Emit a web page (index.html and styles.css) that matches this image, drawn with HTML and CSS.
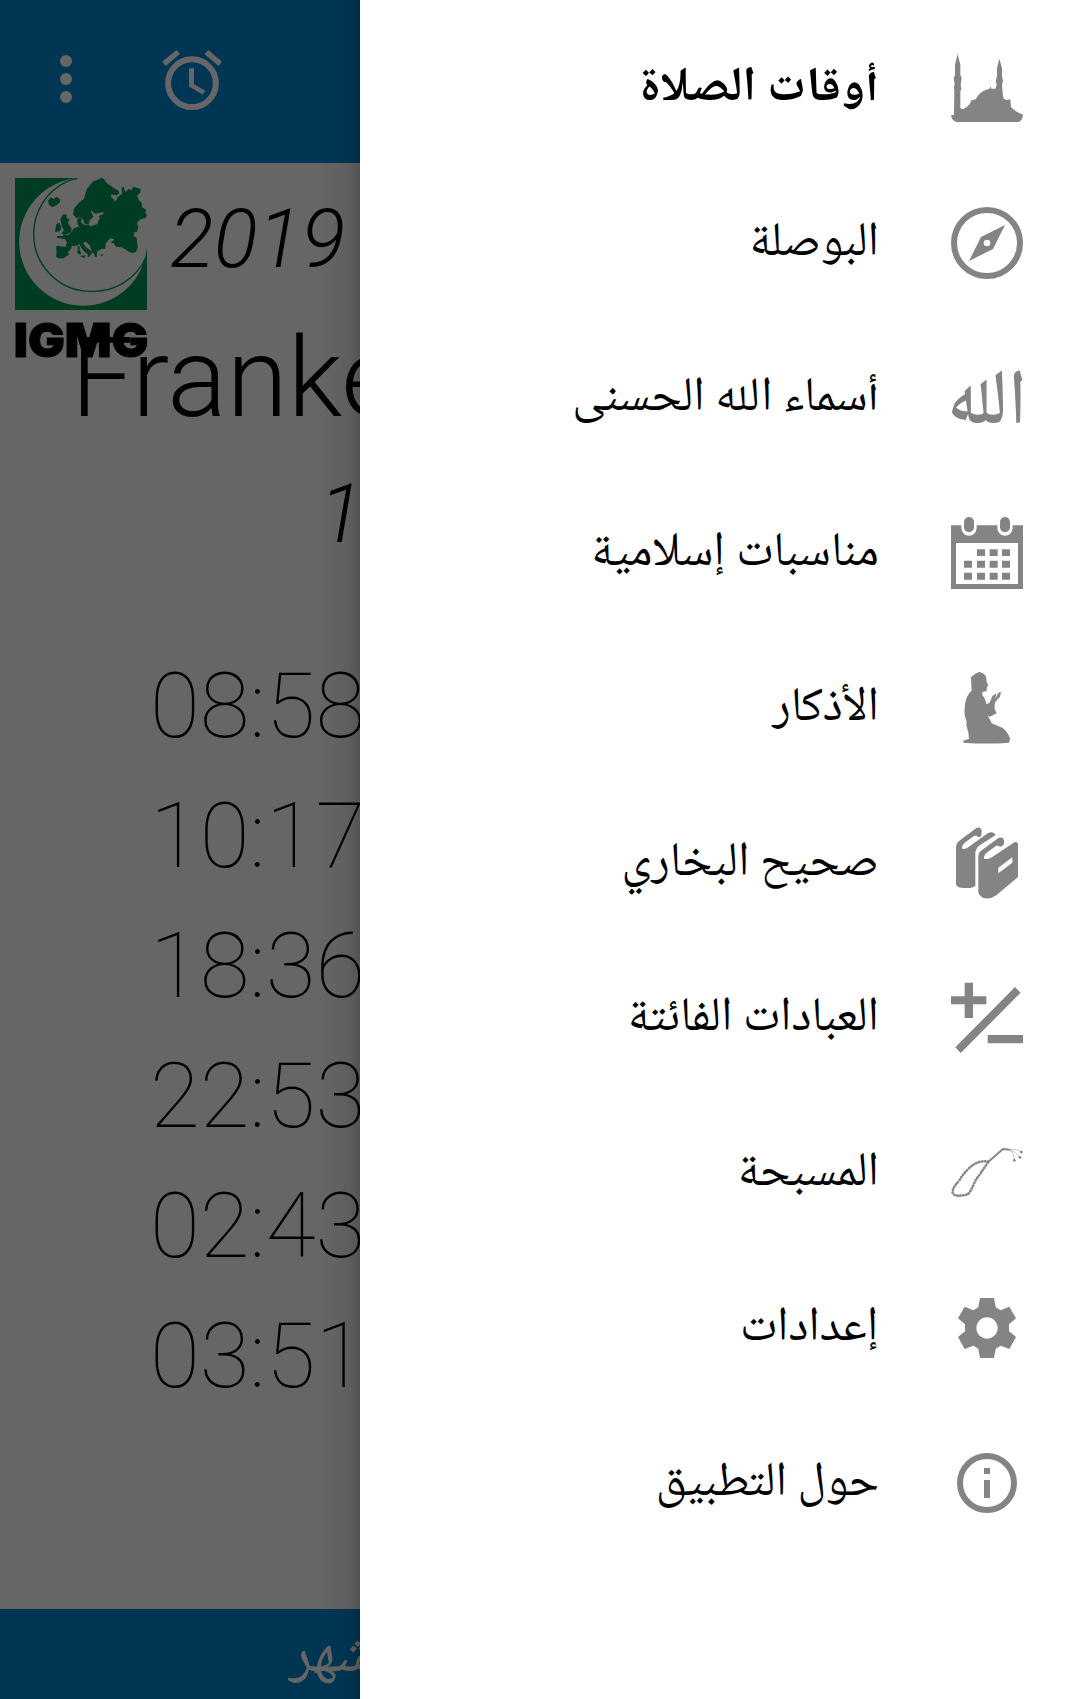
FILE: index.html
```html
<!DOCTYPE html>
<html lang="ar">
<head>
<meta charset="utf-8">
<title>أوقات الصلاة</title>
<link rel="stylesheet" href="styles.css">
</head>
<body>
<div class="app">
  <section class="screen">
    <header class="toolbar">
      <svg class="more" viewBox="0 0 36 144"><circle cx="18" cy="18" r="18"/><circle cx="18" cy="72" r="18"/><circle cx="18" cy="126" r="18"/></svg>
      <svg class="alarm" viewBox="486 149 180 181">
        <circle class="ring" cx="576" cy="249" r="72"/>
        <path d="M567 204H582V252L616 272L608 283L567 259ZM530 149L539 161L497 197L486 184ZM625 149L666 184L656 197L614 162Z"/>
      </svg>
    </header>
    <main class="content">
      <div class="date">
        <svg class="logo" viewBox="45 534 396 540">
          <g class="green">
            <path d="M45 534H232A192 192 0 1 0 441 740V930H45Z"/>
            <path class="thin" d="M232 536Q215 538 200 545A173 173 0 0 0 101 702A172 172 0 0 0 272 874A172 172 0 0 0 438 772"/>
            <path d="M305 534L312 537L320 549L340 563L356 572L358 580L350 586L333 583L334 592L343 600L343 605L350 600L352 592L366 582L365 562L371 561L375 575L387 567L395 570L400 560L422 567L421 577L411 588L418 602L425 608L426 622L439 630L436 638L441 646L436 654L418 659L411 671L415 682L411 695L402 698L401 708L410 714L413 742L408 756L398 759L388 756L366 742L347 740L342 730L332 729L343 718L332 714L317 730L316 746L305 746L300 751L292 752L290 771L284 770L283 762L276 757L270 737L260 727L249 727L257 741L275 754L275 762L267 771L262 770L264 762L255 757L244 744L238 732L230 737L216 737L211 751L203 756L207 763L191 775H174L168 769L170 756L168 742L171 737L196 741L201 728L195 717L172 714L171 708L189 708L191 703L205 705L214 696L222 684L232 682L238 678L232 673V656L242 650L245 657L243 668L254 675L266 674L272 679L292 672L299 654L297 648L310 642V636L286 641L274 632L275 620L286 611L288 592L296 590L296 600L290 603L291 614L272 630L275 640L281 650L270 660L266 673L254 672L250 659L243 650L228 654L219 642L223 624L237 608L252 596L260 568L278 545Z"/>
            <path d="M144 602L153 592L160 596L171 591L180 598V606L168 617L157 621L147 615ZM190 642L200 644V654L208 658L204 670L214 684V696L202 702L184 703L192 690L186 680L181 658ZM169 672L179 668L184 684L179 694L165 696ZM231 752L240 750L244 763H234ZM239 768L256 766L253 775ZM233 739H239V749H233ZM298 764L312 763L306 768Z"/>
          </g>
          <text x="41" y="1071" textLength="404" lengthAdjust="spacingAndGlyphs">IGMG</text>
        </svg>
        <span class="year">2019</span>
      </div>
      <div class="city">Franke</div>
      <div class="hijri">1</div>
      <div class="times">
        <div>08:58</div><div>10:17</div><div>18:36</div><div>22:53</div><div>02:43</div><div>03:51</div>
      </div>
    </main>
    <footer class="bottom"><span>شهر</span></footer>
    <div class="scrim"></div>
  </section>

  <nav class="drawer" dir="rtl">
    <div class="item active">
      <svg viewBox="0 0 216 216"><path d="M0 190L9 188L10 112L8 108L11 98L8 78L12 70L12 38L20 6L28 38L28 68L32 78L29 98L31 110L28 118L28 168Q34 176 48 164Q58 156 62 145L74 142Q84 122 104 114L116 110L118 102L121 110L134 110L137 98L134 88L138 72L138 48L145 20L153 48L153 72L156 88L153 98L155 124L158 140L166 144L178 142L180 165Q190 178 216 188Q214 208 200 210H16Q2 206 0 190Z"/></svg>
      <span>أوقات الصلاة</span>
    </div>
    <div class="item">
      <svg viewBox="0 0 216 216"><circle class="ring" cx="108" cy="108" r="99"/><path fill-rule="evenodd" d="M162 54L126 126L54 162L90 90ZM108 98A10 10 0 1 0 108 118A10 10 0 1 0 108 98Z"/></svg>
      <span>البوصلة</span>
    </div>
    <div class="item">
      <svg viewBox="0 0 216 216"><text class="script" x="108" y="216" direction="rtl" text-anchor="middle" textLength="235" lengthAdjust="spacingAndGlyphs">الله</text></svg>
      <span>أسماء الله الحسنى</span>
    </div>
    <div class="item">
      <svg viewBox="0 0 216 216">
        <path fill-rule="evenodd" d="M0 25H31V33A23 23 0 0 0 77 33V25H139V33A23 23 0 0 0 185 33V25H216V216H0ZM15 78V201H201V78Z"/>
        <rect x="39" y="0" width="30" height="46" rx="15"/><rect x="147" y="0" width="30" height="46" rx="15"/>
        <path d="M78 97H102V117H78ZM116 97H140V117H116ZM153 97H177V117H153ZM39 131H63V152H39ZM78 131H102V152H78ZM116 131H140V152H116ZM153 131H177V152H153ZM39 167H63V188H39ZM78 167H102V188H78ZM116 167H140V188H116ZM153 167H177V188H153Z"/>
      </svg>
      <span>مناسبات إسلامية</span>
    </div>
    <div class="item">
      <svg viewBox="0 0 216 216"><path d="M60 16Q72 4 84 0Q98 2 105 14L107 30L112 40L108 44L107 57L94 60L94 70Q104 80 106 97L116 92L124 72L136 64L133 80L142 62L150 60L147 74L134 88L131 96L131 112L137 124L116 134L110 130L122 154L156 168Q176 188 177 202L174 212Q110 217 38 212L36 207L54 200L52 182L46 160L47 150L41 130Q38 76 62 56L61 40Z"/></svg>
      <span>الأذكار</span>
    </div>
    <div class="item">
      <svg viewBox="0 0 216 216"><path fill-rule="evenodd" d="M15 58Q15 48 24 42L76 3Q91 -3 92 12L91 26Q84 34 76 26L70 26L40 48Q30 60 34 65Q44 68 56 58L110 19Q128 11 134 24L84 56Q73 66 73 80V176Q64 186 30 182Q16 180 15 170ZM82 88Q82 76 92 70L142 33Q158 27 159 42V52Q150 64 142 56H136L106 78Q96 90 100 95Q112 99 124 90L190 46Q200 42 201 52V150L136 205Q116 219 96 212Q84 206 82 196ZM142 122L184 91V107L142 139Z"/></svg>
      <span>صحيح البخاري</span>
    </div>
    <div class="item">
      <svg viewBox="0 0 216 216"><path d="M41 2H66V43H106V67H66V108H41V67H0V43H41ZM192 15L209 32L29 213L13 196ZM110 159H216V184H110Z"/></svg>
      <span>العبادات الفائتة</span>
    </div>
    <div class="item">
      <svg viewBox="0 0 216 216">
        <path class="beads" d="M112 74Q92 70 72 80Q45 96 24 132Q2 154 5 168Q12 182 50 172Q60 164 72 132Q90 108 112 74"/>
        <path class="cord" d="M112 74L156 36L176 38"/>
        <path class="strand" d="M174 38Q200 36 211 44M174 38Q196 44 206 60M174 38Q190 48 190 68"/>
        <circle cx="211" cy="45" r="4"/><circle cx="207" cy="61" r="4"/><circle cx="190" cy="70" r="4"/>
      </svg>
      <span>المسبحة</span>
    </div>
    <div class="item">
      <svg viewBox="0 0 216 216"><path fill-rule="evenodd" d="M87 18H129L134 46L149 55L175 44L195 79L174 97V118L195 135L175 171L149 161L134 170L129 198H87L82 170L67 161L41 171L21 135L42 118V97L21 79L41 44L67 55L82 46ZM108 76A32 32 0 1 0 108 140A32 32 0 1 0 108 76Z"/></svg>
      <span>إعدادات</span>
    </div>
    <div class="item">
      <svg viewBox="0 0 216 216"><circle class="ring" cx="108" cy="108" r="81"/><path d="M99 63H117V81H99ZM99 99H117V153H99Z"/></svg>
      <span>حول التطبيق</span>
    </div>
  </nav>
</div>
</body>
</html>
```
FILE: styles.css
```css
* { box-sizing: border-box; }
body { margin: 0; background: #fff; }

.app { display: flex; width: 1080px; height: 1699px; overflow: hidden; }

/* dimmed main screen, visible left of the drawer */
.screen {
  position: relative;
  display: flex;
  flex-direction: column;
  width: 360px;
  height: 1699px;
  overflow: hidden;
  background: #fff;
  color: #000;
  font-family: Roboto, sans-serif;
  white-space: nowrap;
}
.scrim {
  position: absolute;
  inset: 0;
  background:
    linear-gradient(to right, transparent 315px, rgba(0,0,0,.03) 335px, rgba(0,0,0,.09) 350px, rgba(0,0,0,.19) 360px),
    rgba(0,0,0,.6);
}
.toolbar {
  display: flex;
  align-items: flex-start;
  gap: 90px;
  height: 163px;
  padding: 50px 0 0 60px;
  background: #0288d1;
  fill: #fff;
}
.more { width: 12px; height: 48px; margin-top: 5px; }
.alarm { width: 60px; height: 60px; }
.alarm .ring { fill: none; stroke: #fff; stroke-width: 18; }

.content { flex: 1; }
.date { display: flex; gap: 23px; height: 160px; padding: 15px 0 0 15px; }
.logo { flex: none; width: 132px; height: 180px; overflow: visible; }
.logo .green { fill: #009654; }
.logo .thin { fill: none; stroke: #009654; stroke-width: 4; }
.logo text { font: 900 142px Inter, sans-serif; stroke: #000; stroke-width: 3; }
.year, .hijri { font-size: 81.5px; font-weight: 300; font-style: italic; line-height: 96px; }
.year { margin-top: 13px; }
.city { height: 130px; padding-left: 71px; font-size: 111px; font-weight: 300; line-height: 130px; margin-top: -10px; }
.hijri { padding-left: 319px; margin-top: 23px; }
.times { margin-top: 79px; padding-left: 150px; font-size: 91px; font-weight: 100; line-height: 130px; }

.bottom {
  height: 90px;
  padding-left: 289px;
  background: #0288d1;
  color: #fff;
  font: 60px/94px "Noto Naskh Arabic UI", "Noto Naskh Arabic", serif;
}

/* navigation drawer */
.drawer {
  display: flex;
  flex-direction: column;
  gap: 83px;
  width: 720px;
  padding: 52px 57px 0 0;
  background: #fff;
  color: #000;
  font: 48px/72px "Noto Naskh Arabic UI", "Noto Naskh Arabic", serif;
}
.item { display: flex; gap: 72px; height: 72px; }
.item.active { font-weight: 700; font-size: 48.6px; }
.item svg { flex: none; width: 72px; height: 72px; overflow: visible; fill: #848484; }
.item .ring { fill: none; stroke: #848484; stroke-width: 18; }
.item .script { font: 600 235px "Noto Naskh Arabic UI", "Noto Naskh Arabic", serif; }
.beads { fill: none; stroke: #848484; stroke-width: 8; stroke-linecap: round; stroke-dasharray: 1 8; }
.cord { fill: none; stroke: #848484; stroke-width: 6; stroke-linecap: round; }
.strand { fill: none; stroke: #a8a8a8; stroke-width: 2; }
```
